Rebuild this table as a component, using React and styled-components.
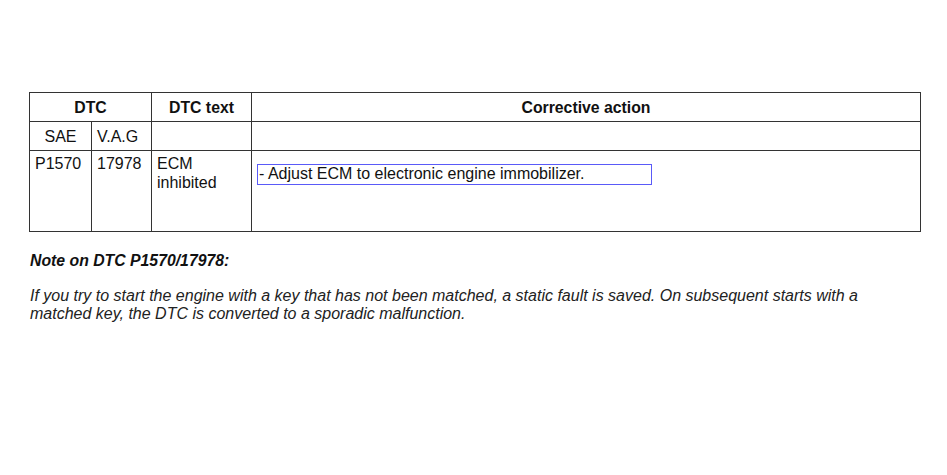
import React from "react";
import styled, { createGlobalStyle } from "styled-components";

const GlobalStyle = createGlobalStyle`
  html, body {
    margin: 0;
    padding: 0;
    background: #fff;
  }
  body {
    font-family: "Liberation Sans", Arial, sans-serif;
    color: #111;
  }
`;

const Page = styled.div`
  width: 947px;
  height: 475px;
  padding: 92px 26px 0 29px;
  box-sizing: border-box;
`;

const Table = styled.table`
  width: 892px;
  border-collapse: collapse;
  table-layout: fixed;
  font-size: 16px;
  border: 1px solid #1a1a1a;
`;

const Cell = styled.td`
  border: 1px solid #333;
  padding: ${(p) => (p.$top ? "3px 5px 0 5px" : "0 5px")};
  height: ${(p) => p.$h || 28}px;
  vertical-align: ${(p) => (p.$top ? "top" : "middle")};
  text-align: ${(p) => (p.$center ? "center" : "left")};
  font-weight: ${(p) => (p.$bold ? "bold" : "normal")};
  font-size: ${(p) => (p.$bold ? "15.8px" : "16px")};
  line-height: 19px;
`;

const ActionBox = styled.div`
  display: block;
  box-sizing: border-box;
  width: 395px;
  height: 21px;
  margin-top: 10px;
  padding: 0 0 0 1px;
  border: 1px solid #5a5af8;
  line-height: 18px;
`;

const Note = styled.p`
  margin: 20px 0 0 1px;
  font-size: 15.8px;
  font-weight: bold;
  font-style: italic;
`;

const Body = styled.p`
  margin: 17px 0 0 1px;
  font-size: 16px;
  font-style: italic;
  line-height: 18px;
  color: #222;
  white-space: nowrap;
`;

export default function App() {
  return (
    <>
      <GlobalStyle />
      <Page>
        <Table>
          <colgroup>
            <col style={{ width: 62 }} />
            <col style={{ width: 60 }} />
            <col style={{ width: 100 }} />
            <col />
          </colgroup>
          <tbody>
            <tr>
              <Cell colSpan={2} $center $bold $h={28}>DTC</Cell>
              <Cell $center $bold $h={28}>DTC text</Cell>
              <Cell $center $bold $h={28}>Corrective action</Cell>
            </tr>
            <tr>
              <Cell $center $h={28}>SAE</Cell>
              <Cell $h={28}>V.A.G</Cell>
              <Cell $h={28} />
              <Cell $h={28} />
            </tr>
            <tr>
              <Cell $top $h={77}>P1570</Cell>
              <Cell $top $h={77}>17978</Cell>
              <Cell $top $h={77}>ECM<br />inhibited</Cell>
              <Cell $top $h={77}>
                <ActionBox>- Adjust ECM to electronic engine immobilizer.</ActionBox>
              </Cell>
            </tr>
          </tbody>
        </Table>
        <Note>Note on DTC P1570/17978:</Note>
        <Body>
          If you try to start the engine with a key that has not been matched, a static fault is saved. On subsequent starts with a
          <br />
          matched key, the DTC is converted to a sporadic malfunction.
        </Body>
      </Page>
    </>
  );
}
